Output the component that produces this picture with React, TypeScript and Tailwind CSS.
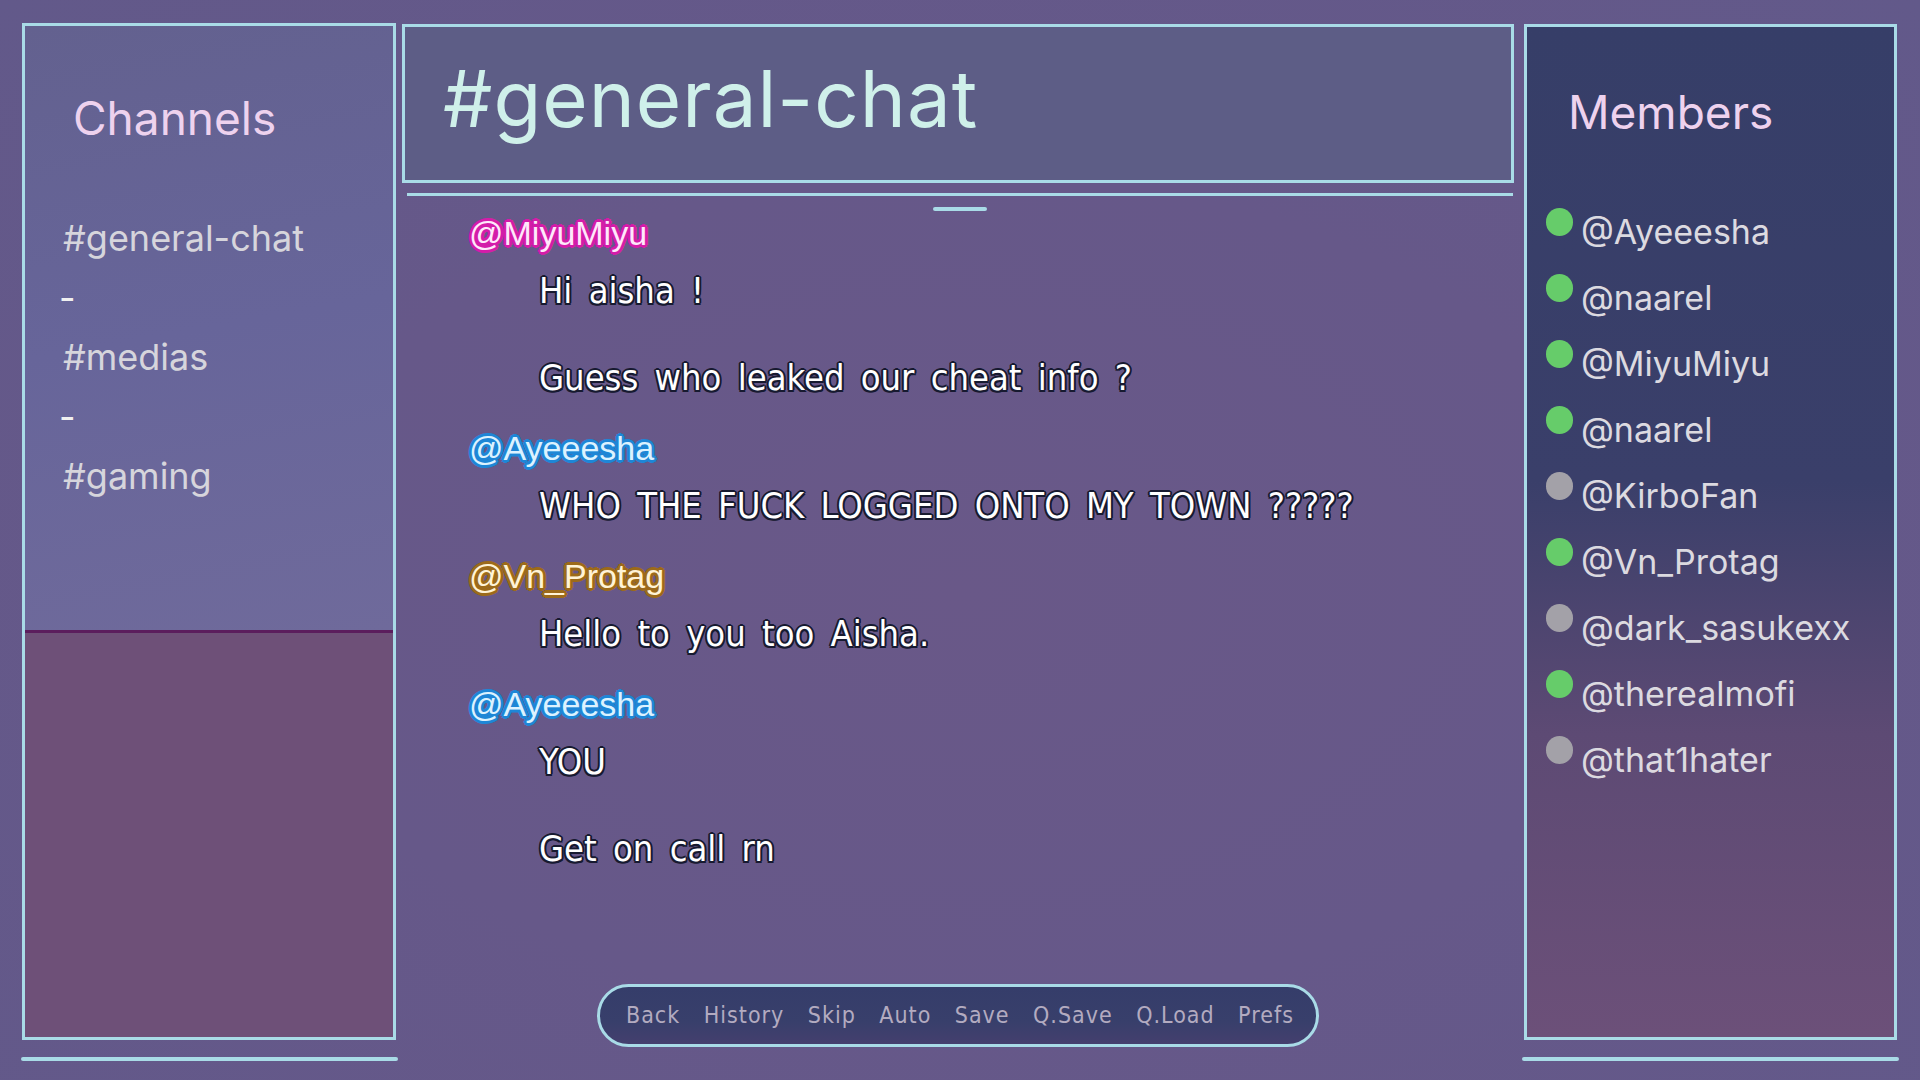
import React from "react";

const channels = ["#general-chat", "-", "#medias", "-", "#gaming"];

const members: { name: string; online: boolean }[] = [
  { name: "@Ayeeesha", online: true },
  { name: "@naarel", online: true },
  { name: "@MiyuMiyu", online: true },
  { name: "@naarel", online: true },
  { name: "@KirboFan", online: false },
  { name: "@Vn_Protag", online: true },
  { name: "@dark_sasukexx", online: false },
  { name: "@therealmofi", online: true },
  { name: "@that1hater", online: false },
];

const nameBase =
  "h-[40px] leading-[40px] text-[34px] font-['Liberation_Sans','Arial',sans-serif] whitespace-pre";
const msgBase =
  "ml-[70px] h-[40px] leading-[40px] text-[36px] text-white font-['Liberation_Sans_Narrow','DejaVu_Sans_Condensed','Roboto_Condensed',sans-serif] [word-spacing:6px] whitespace-pre [text-shadow:2px_0_0_#171a30,-2px_0_0_#171a30,0_2px_0_#171a30,0_-2px_0_#171a30,1.5px_1.5px_0_#171a30,-1.5px_1.5px_0_#171a30,1.5px_-1.5px_0_#171a30,-1.5px_-1.5px_0_#171a30]";

const blueName =
  "text-[#dcf2ff] [text-shadow:3px_0_0_#1e86d6,-3px_0_0_#1e86d6,0_3px_0_#1e86d6,0_-3px_0_#1e86d6,2px_2px_0_#1e86d6,-2px_2px_0_#1e86d6,2px_-2px_0_#1e86d6,-2px_-2px_0_#1e86d6]";
const pinkName =
  "text-[#ffe8fb] [text-shadow:3px_0_0_#d41ca9,-3px_0_0_#d41ca9,0_3px_0_#d41ca9,0_-3px_0_#d41ca9,2px_2px_0_#d41ca9,-2px_2px_0_#d41ca9,2px_-2px_0_#d41ca9,-2px_-2px_0_#d41ca9]";
const goldName =
  "text-[#fff3d6] [text-shadow:3px_0_0_#9c6a1a,-3px_0_0_#9c6a1a,0_3px_0_#9c6a1a,0_-3px_0_#9c6a1a,2px_2px_0_#9c6a1a,-2px_2px_0_#9c6a1a,2px_-2px_0_#9c6a1a,-2px_-2px_0_#9c6a1a]";

const menuItems = ["Back", "History", "Skip", "Auto", "Save", "Q.Save", "Q.Load", "Prefs"];

export default function App() {
  return (
    <div className="w-[1920px] h-[1080px] overflow-hidden flex bg-[#645a89] bg-[radial-gradient(ellipse_at_50%_55%,#695888_0%,#665889_50%,#62598a_100%)] font-['Inter',sans-serif]">
      {/* Left column: channels */}
      <div className="flex flex-col w-[377px] ml-[21px] pt-[23px]">
        <div className="ml-[1px] w-[374px] h-[1017px] border-[3px] border-[#a9dbe7] flex flex-col">
          <div className="h-[604px] bg-[linear-gradient(170deg,#63618f_0%,#67659a_50%,#6f6a9b_100%)] pl-[38px] pt-[69px]">
            <div className="ml-[10px] text-[46px] leading-[46px] text-[#eed2ee]">Channels</div>
            <div className="mt-[68px] flex flex-col">
              {channels.map((c, i) => (
                <div
                  key={i}
                  className={
                    c === "-"
                      ? "-ml-[4px] h-[59.5px] leading-[59.5px] text-[36px] text-[#f0f0f0]"
                      : "h-[59.5px] leading-[59.5px] text-[36px] text-[#d6d5dc]"
                  }
                >
                  {c}
                </div>
              ))}
            </div>
          </div>
          <div className="h-[3px] bg-[#5b1d5d]" />
          <div className="flex-1 bg-[#6e5078]" />
        </div>
        <div className="mt-[17px] h-[4px] rounded-full bg-[#a9dbe7]" />
      </div>

      {/* Center column: chat */}
      <div className="ml-[4px] w-[1112px] h-full flex flex-col pt-[24px]">
        <div className="h-[159px] border-[3px] border-[#a9dbe7] bg-[#5d5d86] pl-[38px] pt-[33px]">
          <div className="text-[78px] leading-[78px] tracking-[1px] text-[#cff0ea]">#general-chat</div>
        </div>
        <div className="mt-[10px] ml-[5px] w-[1106px] h-[3px] bg-[#a9dbe7]" />
        <div className="mt-[11px] ml-[531px] w-[54px] h-[4px] rounded-full bg-[#a9dbe7]" />

        <div className="mt-[2px] pl-[67px] flex flex-col">
          <div className={`${nameBase} ${pinkName}`}>@MiyuMiyu</div>
          <div className={`mt-[18px] ${msgBase}`}>Hi aisha !</div>
          <div className={`mt-[47px] ${msgBase}`}>Guess who leaked our cheat info ?</div>

          <div className={`mt-[30px] ${nameBase} ${blueName}`}>@Ayeeesha</div>
          <div className={`mt-[18px] ${msgBase}`}>WHO THE FUCK LOGGED ONTO MY TOWN ?????</div>

          <div className={`mt-[30px] ${nameBase} ${goldName}`}>@Vn_Protag</div>
          <div className={`mt-[18px] ${msgBase}`}>Hello to you too Aisha.</div>

          <div className={`mt-[30px] ${nameBase} ${blueName}`}>@Ayeeesha</div>
          <div className={`mt-[18px] ${msgBase}`}>YOU</div>
          <div className={`mt-[47px] ${msgBase}`}>Get on call rn</div>
        </div>

        <div className="mt-auto mb-[33px] mx-auto w-[722px] h-[63px] rounded-full border-[3px] border-[#a9dbe7] bg-[linear-gradient(180deg,#353d6a_0%,#383f6b_60%,#443f6e_100%)] flex items-center justify-between pl-[26px] pr-[22px]">
          {menuItems.map((m) => (
            <span
              key={m}
              className="text-[23px] leading-none tracking-[1px] text-[#b3abc0] font-['Liberation_Sans_Narrow','DejaVu_Sans_Condensed','Roboto_Condensed',sans-serif]"
            >
              {m}
            </span>
          ))}
        </div>
      </div>

      {/* Right column: members */}
      <div className="flex flex-col w-[377px] ml-[8px] pt-[24px]">
        <div className="ml-[2px] w-[373px] h-[1016px] border-[3px] border-[#a9dbe7] bg-[linear-gradient(180deg,#363e68_0%,#3a3f6a_45%,#5d4a74_70%,#6c5079_100%)] pl-[19px] pt-[62px]">
          <div className="ml-[22px] text-[46px] leading-[46px] text-[#eed2ee]">Members</div>
          <div className="mt-[64px] flex flex-col">
            {members.map((m, i) => (
              <div key={i} className="flex items-start h-[66px]">
                <div
                  className={
                    m.online
                      ? "mt-[9px] w-[27px] h-[28px] rounded-full bg-[#66cc6a] shrink-0"
                      : "mt-[9px] w-[27px] h-[28px] rounded-full bg-[#a3a1a8] shrink-0"
                  }
                />
                <div className="ml-[8px] text-[34px] leading-[66px] text-[#dcdae0] whitespace-pre">{m.name}</div>
              </div>
            ))}
          </div>
        </div>
        <div className="mt-[17px] h-[4px] rounded-full bg-[#a9dbe7]" />
      </div>
    </div>
  );
}
